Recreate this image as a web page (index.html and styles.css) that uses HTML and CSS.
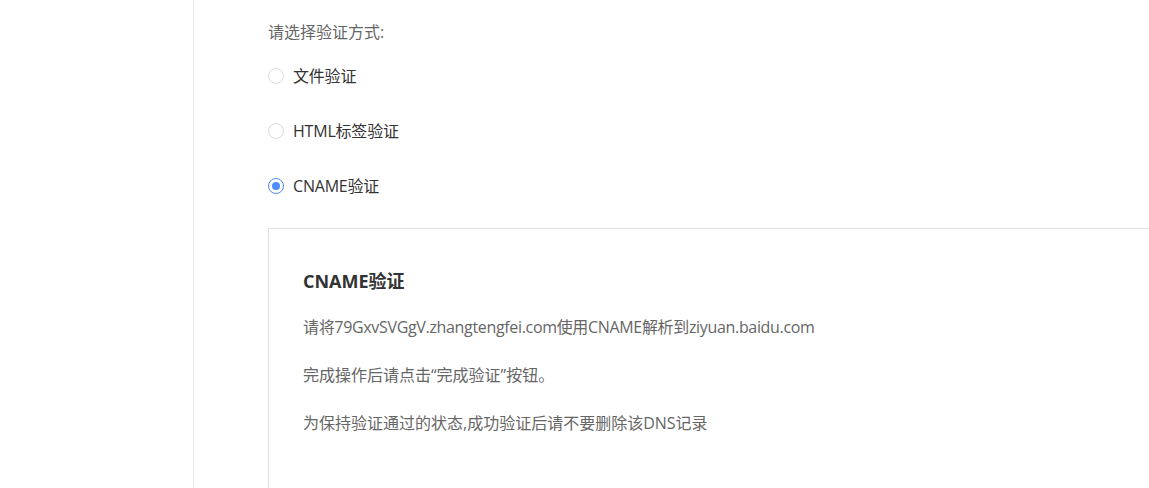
FILE: index.html
```html
<!DOCTYPE html>
<html lang="zh-CN">
<head>
<meta charset="utf-8">
<title>CNAME验证</title>
<link rel="stylesheet" href="styles.css">
</head>
<body>
<div class="page">
  <aside class="sidebar"></aside>
  <main class="main">
    <div class="prompt">请选择验证方式:</div>
    <div class="options">
      <label class="option"><span class="radio"></span><span class="opt-text">文件验证</span></label>
      <label class="option"><span class="radio"></span><span class="opt-text">HTML标签验证</span></label>
      <label class="option"><span class="radio checked"></span><span class="opt-text">CNAME验证</span></label>
    </div>
    <section class="panel">
      <h2 class="panel-title">CNAME验证</h2>
      <p class="line l1">请将79GxvSVGgV.zhangtengfei.com使用CNAME解析到ziyuan.baidu.com</p>
      <p class="line l2">完成操作后请点击“完成验证”按钮。</p>
      <p class="line l3">为保持验证通过的状态,成功验证后请不要删除该DNS记录</p>
    </section>
  </main>
</div>
</body>
</html>
```
FILE: styles.css
```css
html, body {
  margin: 0;
  padding: 0;
  background: #fff;
}
body {
  font-family: "Open Sans", "Noto Sans CJK SC", sans-serif;
  font-size: 16px;
  color: #333;
}
.page {
  display: flex;
  height: 488px;
  overflow: hidden;
}
.sidebar {
  width: 193px;
  flex: none;
  border-right: 1px solid #e8e8e8;
}
.main {
  flex: 1;
  padding: 21px 0 0 74px;
  min-width: 0;
}
.prompt {
  line-height: 22px;
  color: #666;
}
.options {
  display: flex;
  flex-direction: column;
  gap: 33px;
  margin-top: 22px;
}
.option {
  display: flex;
  align-items: center;
  gap: 9px;
  height: 22px;
  line-height: 22px;
  color: #333;
}
.opt-text {
  letter-spacing: -0.2px;
}
.radio {
  width: 16px;
  height: 16px;
  border: 1px solid #dcdcdc;
  border-radius: 50%;
  box-sizing: border-box;
  display: flex;
  align-items: center;
  justify-content: center;
  flex: none;
}
.radio.checked {
  border-color: #4e8cf7;
}
.radio.checked::after {
  content: "";
  width: 8px;
  height: 8px;
  border-radius: 50%;
  background: #4e8cf7;
}
.panel {
  margin-top: 31px;
  border: 1px solid #e0e0e0;
  border-right: none;
  padding: 39px 0 0 34px;
  height: 300px;
}
.panel-title {
  margin: 0;
  font-size: 18px;
  font-weight: bold;
  line-height: 26px;
  color: #333;
}
.line {
  margin: 0;
  line-height: 22px;
  color: #666;
}
.l1 { margin-top: 22px; letter-spacing: -0.33px; }
.l2 { margin-top: 26px; }
.l3 { margin-top: 26px; }
```
